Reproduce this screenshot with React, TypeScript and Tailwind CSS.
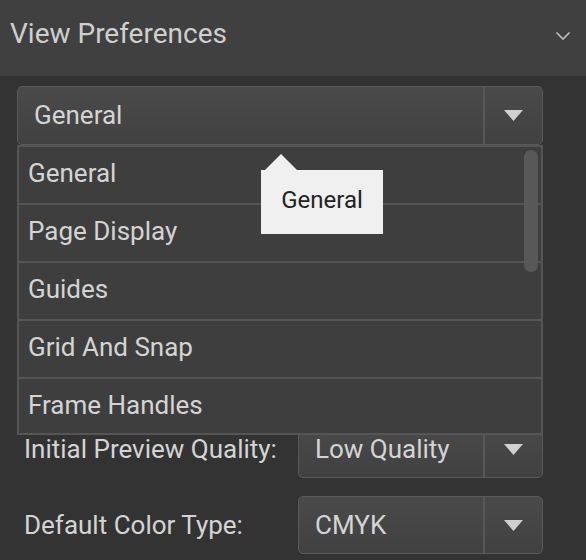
import React from 'react';

const items = ['General', 'Page Display', 'Guides', 'Grid And Snap', 'Frame Handles'];

function Caret() {
  return (
    <svg width="19" height="11" viewBox="0 0 19 11" className="block">
      <path d="M0 0 H19 L9.5 11 Z" fill="#d0d0d0" />
    </svg>
  );
}

function SelectBox({ value, className }: { value: string; className?: string }) {
  return (
    <div
      className={
        'flex h-[58px] rounded-[5px] border border-[#5a5a5a] bg-gradient-to-b from-[#4a4a4a] to-[#414141] ' +
        (className ?? '')
      }
    >
      <div className="flex flex-1 items-center px-4 text-[26px] text-[#d4d4d4]">{value}</div>
      <div className="flex w-[59px] items-center justify-center border-l-2 border-[#575757]">
        <Caret />
      </div>
    </div>
  );
}

export default function App() {
  return (
    <div
      className="h-[560px] w-[586px] overflow-hidden bg-[#333333]"
      style={{ fontFamily: 'Roboto, "Noto Sans", sans-serif' }}
    >
      <div className="flex h-[76px] items-center justify-between bg-[#404040] pb-2 pl-[10px] pr-[15px]">
        <span className="text-[28px] text-[#cfcfcf]">View Preferences</span>
        <svg width="16" height="10" viewBox="0 0 16 10" className="mt-1">
          <path d="M1.5 1.5 L8 8 L14.5 1.5" fill="none" stroke="#bdbdbd" strokeWidth="1.6" />
        </svg>
      </div>

      <div className="relative pl-[17px] pr-[43px] pt-[10px]">
        <SelectBox value="General" className="!h-[59px]" />

        <div className="mt-[275px] flex flex-col gap-[18px]">
          <div className="flex items-center">
            <span className="w-[281px] pl-[7px] text-[26px] text-[#d4d4d4]">Initial Preview Quality:</span>
            <SelectBox value="Low Quality" className="flex-1" />
          </div>
          <div className="flex items-center">
            <span className="w-[281px] pl-[7px] text-[26px] text-[#d4d4d4]">Default Color Type:</span>
            <SelectBox value="CMYK" className="flex-1" />
          </div>
        </div>

        <div className="absolute left-[17px] right-[43px] top-[69px] h-[290px] overflow-hidden border-2 border-[#555555] bg-[#3e3e3e]">
          {items.map((it) => (
            <div
              key={it}
              className="flex h-[58px] shrink-0 items-center border-b-2 border-[#555555] pb-[4px] pl-[9px] text-[26px] text-[#d4d4d4]"
            >
              {it}
            </div>
          ))}
          <div className="absolute right-[3px] top-[3px] h-[122px] w-[14px] rounded-full bg-[#585858]" />

          <div className="absolute left-[242px] top-[23px]">
            <svg width="36" height="17" viewBox="0 0 36 17" className="absolute -top-[16px] left-[3px] block">
              <path d="M0 17 L17 0 L34 17 Z" fill="#f0f0f0" />
            </svg>
            <div className="flex h-[64px] w-[122px] items-center justify-center bg-[#f0f0f0] pb-1 text-[24px] text-[#222222]">
              General
            </div>
          </div>
        </div>
      </div>
    </div>
  );
}
